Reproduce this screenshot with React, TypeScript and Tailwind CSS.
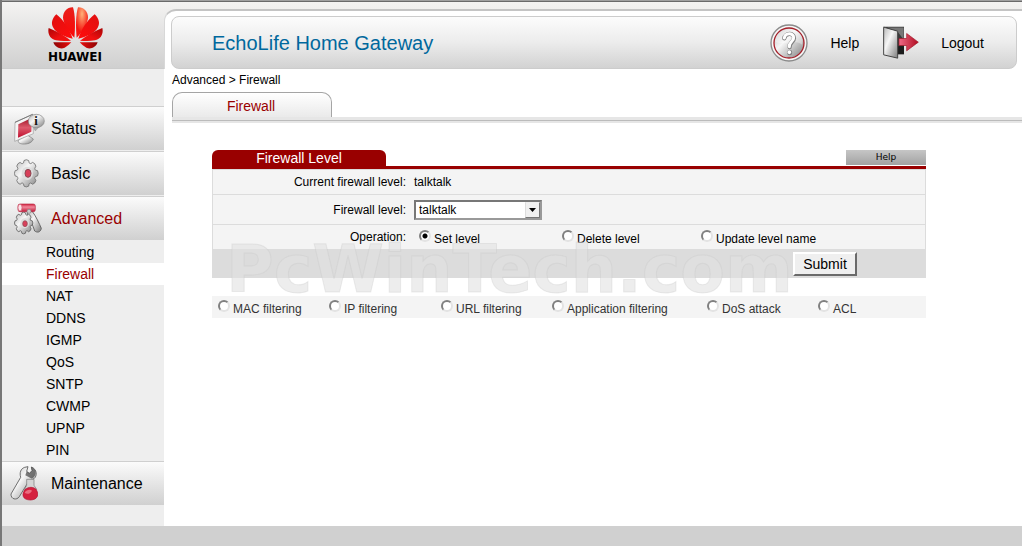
import { useState, type ReactNode } from "react";

function gearPath(cx: number, cy: number, rx: number, ry: number, teeth: number) {
  const points: string[] = [];
  const profile: [number, number][] = [
    [-0.5, 0.8],
    [-0.38, 0.82],
    [-0.26, 0.98],
    [0, 1.02],
    [0.26, 0.98],
    [0.38, 0.82],
  ];
  for (let i = 0; i < teeth; i++) {
    for (const [offset, radius] of profile) {
      const a = ((i + offset) / teeth) * Math.PI * 2;
      points.push(`${(cx + Math.cos(a) * rx * radius).toFixed(1)} ${(cy + Math.sin(a) * ry * radius).toFixed(1)}`);
    }
  }
  return `M${points.join("L")}Z`;
}

function Petals({ top }: { top: string }) {
  return (
    <>
      <path fill={top} d="M79 92C82 62 82 24 75 1C58 0 45 14 45 32C46 50 62 74 79 92Z" />
      <path fill="url(#petalMid)" d="M74 95C66 68 46 38 25 22C12 34 8 50 16 62C26 80 54 90 74 95Z" />
      <path fill="url(#petalLow)" d="M69 101C50 86 24 72 2 63C-2 80 6 97 24 100C40 103 56 102 69 101Z" />
      <path fill="url(#petalBase)" d="M70 106L16 106C22 122 38 128 50 122C59 117 65 111 70 106Z" />
    </>
  );
}

function Logo() {
  return (
    <div className="flex flex-col items-center">
      <svg viewBox="0 0 165 126" className="h-[42px] w-[55px]" aria-hidden="true">
        <defs>
          <linearGradient id="petalTop" x1="0" y1="0" x2="0" y2="1">
            <stop offset="0" stopColor="#e8201c" />
            <stop offset="1" stopColor="#fb0606" />
          </linearGradient>
          <radialGradient id="petalShine" cx="0.5" cy="0.22" r="0.6">
            <stop offset="0" stopColor="#ffb27a" />
            <stop offset="1" stopColor="#f51410" />
          </radialGradient>
          <linearGradient id="petalMid" x1="0" y1="0" x2="1" y2="1">
            <stop offset="0" stopColor="#e01010" />
            <stop offset="1" stopColor="#ff0c0c" />
          </linearGradient>
          <linearGradient id="petalLow" x1="0" y1="0" x2="1" y2="1">
            <stop offset="0" stopColor="#a80505" />
            <stop offset="0.6" stopColor="#f01010" />
          </linearGradient>
          <linearGradient id="petalBase" x1="0" y1="0" x2="1" y2="0">
            <stop offset="0" stopColor="#8e0303" />
            <stop offset="1" stopColor="#ea0c0c" />
          </linearGradient>
        </defs>
        <Petals top="url(#petalTop)" />
        <g transform="translate(165 0) scale(-1 1)">
          <Petals top="url(#petalShine)" />
        </g>
      </svg>
      <span className="mt-px font-['DejaVu_Sans',sans-serif] text-[12px] leading-[14px] font-bold text-black">HUAWEI</span>
    </div>
  );
}

function SharedGradients() {
  return (
    <svg className="absolute size-0" aria-hidden="true">
      <defs>
        <linearGradient id="metal" x1="0" y1="0" x2="1" y2="1">
          <stop offset="0" stopColor="#b8b8b8" />
          <stop offset="0.4" stopColor="#f6f6f6" />
          <stop offset="1" stopColor="#7c7c7c" />
        </linearGradient>
        <linearGradient id="ruby" x1="0" y1="0" x2="0" y2="1">
          <stop offset="0" stopColor="#d21f3d" />
          <stop offset="0.4" stopColor="#f08a9c" />
          <stop offset="1" stopColor="#c01838" />
        </linearGradient>
        <linearGradient id="screen" x1="0" y1="0" x2="0" y2="1">
          <stop offset="0" stopColor="#9c0f22" />
          <stop offset="0.5" stopColor="#dd5a6c" />
          <stop offset="1" stopColor="#c01030" />
        </linearGradient>
      </defs>
    </svg>
  );
}

function StatusIcon() {
  return (
    <svg viewBox="0 0 93 96" className="h-8 w-[31px]" aria-hidden="true">
      <path d="M14 80L40 66L58 78C54 90 40 94 26 93C16 92 10 88 14 80Z" fill="url(#metal)" stroke="#777" strokeWidth="2" />
      <path d="M3 28L56 4L58 62L2 85Z" fill="#f4f4f4" stroke="#999" strokeWidth="2" />
      <path d="M3 28L56 4" stroke="#777" strokeWidth="3" />
      <path d="M13 34L54 14L52 56L12 74Z" fill="url(#screen)" />
      <path d="M56 40L64 54L74 43Z" fill="#aaa" stroke="#888" />
      <ellipse cx="67" cy="24" rx="24" ry="20" fill="url(#metal)" stroke="#8a8a8a" strokeWidth="2" />
      <text x="66" y="37" textAnchor="middle" fontSize="38" fontWeight="bold" fontFamily="Liberation Serif, serif" fill="#111">i</text>
    </svg>
  );
}

function BasicIcon() {
  return (
    <svg viewBox="0 0 75 87" className="h-[29px] w-[25px]" aria-hidden="true">
      <path d={gearPath(37, 43, 35, 40, 8)} fill="url(#metal)" stroke="#707070" strokeWidth="2.5" strokeLinejoin="round" />
      <ellipse cx="40" cy="43" rx="17" ry="20" fill="#dedede" />
      <ellipse cx="42" cy="43" rx="9" ry="12" fill="#d8405a" stroke="#8a4a54" strokeWidth="3" />
    </svg>
  );
}

function AdvancedIcon() {
  return (
    <svg viewBox="0 0 84 96" className="h-8 w-7" aria-hidden="true">
      <path d="M40 26L54 24C66 40 76 62 82 76C80 88 70 90 62 84C56 66 50 50 40 38Z" fill="url(#metal)" stroke="#555" strokeWidth="2.5" />
      <path d={gearPath(29, 60, 27, 32, 8)} fill="url(#metal)" stroke="#606060" strokeWidth="2.5" strokeLinejoin="round" />
      <ellipse cx="32" cy="61" rx="13" ry="15" fill="#dedede" />
      <ellipse cx="33" cy="62" rx="7" ry="9" fill="#d8405a" stroke="#8a4a54" strokeWidth="2" />
      <rect x="12" y="3" width="52" height="23" rx="6" fill="url(#ruby)" stroke="#b83048" strokeWidth="2" />
      <ellipse cx="18" cy="14" rx="6" ry="10" fill="#fbe4e8" stroke="#d0506a" strokeWidth="2" />
      <circle cx="45" cy="25" r="6" fill="#ccc" stroke="#888" strokeWidth="2" />
    </svg>
  );
}

function MaintenanceIcon() {
  return (
    <svg viewBox="0 0 84 105" className="h-[35px] w-7" aria-hidden="true">
      <path
        d="M44 4L54 2L50 16L58 22L66 14L64 3C82 10 82 30 72 38C64 44 60 44 56 46L28 92C20 104 2 100 3 84L32 34C28 20 32 8 44 4Z"
        fill="url(#metal)"
        stroke="#555"
        strokeWidth="2.5"
        strokeLinejoin="round"
      />
      <path d="M50 16L58 22L66 14L64 3C82 10 80 30 66 38L46 28Z" fill="#444" opacity="0.7" />
      <path d="M50 40L72 40L72 58L80 70L44 70L50 58Z" fill="#d4d4d4" stroke="#777" strokeWidth="2" />
      <path d="M46 70C56 62 70 62 78 70C88 84 84 101 62 102C36 102 34 84 46 70Z" fill="#d5213f" stroke="#b01030" strokeWidth="2" />
      <path d="M44 80C50 70 62 70 66 74C62 84 50 86 44 80Z" fill="#f07f90" opacity="0.8" />
    </svg>
  );
}

function HelpIcon() {
  return (
    <svg viewBox="0 0 114 114" className="size-[38px]" aria-hidden="true">
      <circle cx="57" cy="57" r="54" fill="#f7f7f7" stroke="#8b8b8b" strokeWidth="4" />
      <circle cx="57" cy="57" r="45" fill="url(#metal)" stroke="#a5202a" strokeWidth="4" />
      <path d="M15 52C18 24 46 8 74 18C98 28 100 52 96 62C76 44 36 68 15 52Z" fill="#fff" opacity="0.35" />
      <g fill="none" strokeLinecap="round" strokeLinejoin="round">
        <path d="M43 43C45 26 72 25 72 42C72 54 58 54 59 69" stroke="#808080" strokeWidth="13" />
        <path d="M59 85V86" stroke="#808080" strokeWidth="15" />
        <path d="M43 42C45 26 71 25 71 41C71 53 57 53 58 68" stroke="#fff" strokeWidth="9" />
        <path d="M58 84V85" stroke="#fff" strokeWidth="11" />
      </g>
    </svg>
  );
}

function LogoutIcon() {
  return (
    <svg viewBox="0 0 108 98" className="h-[33px] w-9" aria-hidden="true">
      <defs>
        <linearGradient id="arrow" x1="0" y1="0" x2="1" y2="0">
          <stop offset="0" stopColor="#f06a86" />
          <stop offset="1" stopColor="#b00b20" />
        </linearGradient>
      </defs>
      <path d="M1 2H63V84H40V20Z" fill="#3a3a3a" />
      <path d="M12 4H62V40L45 18Z" fill="#777" />
      <path d="M44 60H63V84H44Z" fill="#1c1c1c" />
      <path d="M2 3L44 15V96L2 86Z" fill="url(#metal)" stroke="#444" strokeWidth="3" />
      <path d="M48 37H71V22L106 48L71 74V58H48Z" fill="url(#arrow)" stroke="#a01525" strokeWidth="2" />
    </svg>
  );
}

function MenuHeading({ label, icon, inset, active }: { label: string; icon: ReactNode; inset: string; active?: boolean }) {
  return (
    <a
      href="#"
      className={`flex h-11 items-center border-t border-[#cfcfcf] bg-linear-to-b from-[#fbfbfb] to-[#d0d0d0] text-[16px] leading-5 ${active ? "text-[#990000]" : "text-black"}`}
    >
      <span className={`w-[49px] ${inset}`}>{icon}</span>
      {label}
    </a>
  );
}

function Radio({ id, name, label, checked, onChange }: { id: string; name: string; label: string; checked: boolean; onChange: () => void }) {
  return (
    <label htmlFor={id} className="flex items-start gap-[3px] pt-px">
      <input
        id={id}
        name={name}
        type="radio"
        checked={checked}
        onChange={onChange}
        className="size-3 shrink-0 appearance-none rounded-full border-2 border-t-[#808080] border-r-[#e3e3e3] border-b-[#e3e3e3] border-l-[#808080] bg-white checked:bg-[radial-gradient(circle,#000_2px,#fff_3px)]"
      />
      <span className="pt-0.5 leading-[14px] whitespace-nowrap">{label}</span>
    </label>
  );
}

const submenu = ["Routing", "Firewall", "NAT", "DDNS", "IGMP", "QoS", "SNTP", "CWMP", "UPNP", "PIN"];
const operations = ["Set level", "Delete level", "Update level name"];
const filters = ["MAC filtering", "IP filtering", "URL filtering", "Application filtering", "DoS attack", "ACL"];

export default function App() {
  const [operation, setOperation] = useState("Set level");
  const [filter, setFilter] = useState("");

  return (
    <div className="flex min-h-screen flex-col border-l-2 border-[#777] bg-[#eeeeee] font-['Liberation_Sans',Arial,sans-serif] text-[12px] text-black">
      <SharedGradients />
      <div className="h-0.5 border-b border-[#6a6a6a] bg-[#a0a0a0]" />
      <header className="flex h-[67px] border-b border-[#cccccc] bg-linear-to-b from-[#f4f3f2] to-[#d0d0d0]">
        <div className="flex w-[162px] shrink-0 justify-center pt-[5px] pr-4">
          <Logo />
        </div>
        <div className="-mb-px mt-[7px] flex grow rounded-tl-[12px] border-t-2 border-l border-t-[#c4c4c4] border-l-[#d8d8d8] bg-white pt-[5px] pr-[5px] pl-1.5">
          <div className="flex grow items-center rounded-lg border border-[#cccccc] bg-linear-to-b from-[#fcfcfc] via-[#ececec] to-[#d2d2d2] pr-8 pl-10">
            <h1 className="grow text-[20px] leading-6 text-[#00689d]">EchoLife Home Gateway</h1>
            <nav className="flex items-center gap-6 text-[14px] leading-5">
              <a href="#" className="flex items-center gap-[22px]">
                <HelpIcon />
                Help
              </a>
              <a href="#" className="flex items-center gap-[22px]">
                <LogoutIcon />
                Logout
              </a>
            </nav>
          </div>
        </div>
      </header>

      <div className="flex grow">
        <aside className="w-[162px] shrink-0 pt-[37px] pb-[21px]">
          <nav>
            <div className="flex flex-col gap-px pb-px">
              <MenuHeading label="Status" icon={<StatusIcon />} inset="pl-3" />
              <MenuHeading label="Basic" icon={<BasicIcon />} inset="pl-3" />
              <MenuHeading label="Advanced" icon={<AdvancedIcon />} inset="pl-3" active />
            </div>
            <ul className="text-[14px] leading-[22px]">
              {submenu.map((item) => (
                <li key={item}>
                  <a href="#" className={`block pl-11 ${item === "Firewall" ? "bg-white text-[#990000]" : ""}`}>
                    {item}
                  </a>
                </li>
              ))}
            </ul>
            <MenuHeading label="Maintenance" icon={<MaintenanceIcon />} inset="pl-2" />
          </nav>
        </aside>

        <main className="min-w-0 grow bg-white">
          <p className="pl-2 leading-[23px]">Advanced &gt; Firewall</p>
          <div className="pl-2">
            <div className="flex h-[25px]">
              <a
                href="#"
                className="flex w-40 items-center justify-center rounded-t-[10px] border border-b-0 border-[#a5a5a5] bg-linear-to-b from-white to-[#eaeaea] pt-0.5 pr-0.5 text-[14px] leading-5 text-[#990000]"
              >
                Firewall
              </a>
            </div>
            <div className="h-1.5 border-t-3 border-b-2 border-[#e6e6e6] bg-[#bbbbbb]" />
          </div>

          <form className="mt-[27px] mr-24 ml-12" onSubmit={(e) => e.preventDefault()}>
            <div className="flex items-start justify-between border-b-3 border-[#990000]">
              <h2 className="h-4 w-[174px] rounded-t-md bg-[#990000] text-center text-[14px] leading-4 text-white">Firewall Level</h2>
              <button type="button" className="h-[15px] w-20 bg-linear-to-b from-[#c6c6c6] to-[#a2a2a2] font-['DejaVu_Sans',sans-serif] text-[9px] leading-[15px]">
                Help
              </button>
            </div>

            <div className="relative">
              <div className="border-x border-t border-[#dcdcdc] bg-[#f4f4f4]">
                <div className="flex h-[25px] items-center gap-2 border-b border-[#dcdcdc]">
                  <span className="w-[193px] text-right">Current firewall level:</span>
                  <span>talktalk</span>
                </div>
                <div className="flex h-[30px] items-center gap-2 border-b border-[#dcdcdc]">
                  <label htmlFor="level" className="w-[193px] text-right">
                    Firewall level:
                  </label>
                  <span className="relative">
                    <select
                      id="level"
                      className="block h-5 w-32 appearance-none border-2 border-t-[#777] border-r-[#999] border-b-[#999] border-l-[#777] bg-white pl-[3px] text-[12px] leading-4"
                    >
                      <option>talktalk</option>
                    </select>
                    <span className="pointer-events-none absolute top-0.5 right-0.5 flex h-4 w-[15px] items-center justify-center border border-t-[#eee] border-r-[#777] border-b-[#777] border-l-[#ddd] bg-[#f0f0f0]">
                      <svg viewBox="0 0 7 4" className="h-1 w-[7px]" aria-hidden="true">
                        <path d="M0 0H7L3.5 4Z" fill="#000" />
                      </svg>
                    </span>
                  </span>
                </div>
                <div role="radiogroup" aria-label="Operation" className="flex h-6 items-center gap-2">
                  <span className="w-[193px] text-right">Operation:</span>
                  <div className="grid grow grid-cols-[143px_139px_1fr] pl-[5px]">
                    {operations.map((item) => (
                      <Radio key={item} id={item} name="operation" label={item} checked={operation === item} onChange={() => setOperation(item)} />
                    ))}
                  </div>
                </div>
              </div>
              <div className="flex h-[29px] items-center justify-end bg-[#dcdcdc] pr-[69px]">
                <button
                  type="submit"
                  className="relative z-10 h-6 w-16 border-2 border-t-white border-r-[#6a6a6a] border-b-[#6a6a6a] border-l-white bg-[#efefef] text-[14px] leading-5"
                >
                  Submit
                </button>
              </div>
              <div
                aria-hidden="true"
                className="pointer-events-none absolute top-[77px] left-3.5 font-['DejaVu_Sans',Verdana,sans-serif] text-[65px] leading-[48px] font-bold whitespace-nowrap text-[#e1e1e1]/60 [-webkit-text-stroke:1px_rgba(190,190,190,0.25)]"
              >
                PcWinTech.com
              </div>
            </div>

            <div
              role="radiogroup"
              aria-label="Filtering"
              className="mt-[18px] grid h-[22px] grid-cols-[111px_112px_111px_155px_111px_1fr] items-center bg-[#f4f4f4] pl-1.5 text-[#333]"
            >
              {filters.map((item) => (
                <Radio key={item} id={item} name="filter" label={item} checked={filter === item} onChange={() => setFilter(item)} />
              ))}
            </div>
          </form>
        </main>
      </div>

      <footer className="h-5 bg-[#d0d0d0]" />
    </div>
  );
}
